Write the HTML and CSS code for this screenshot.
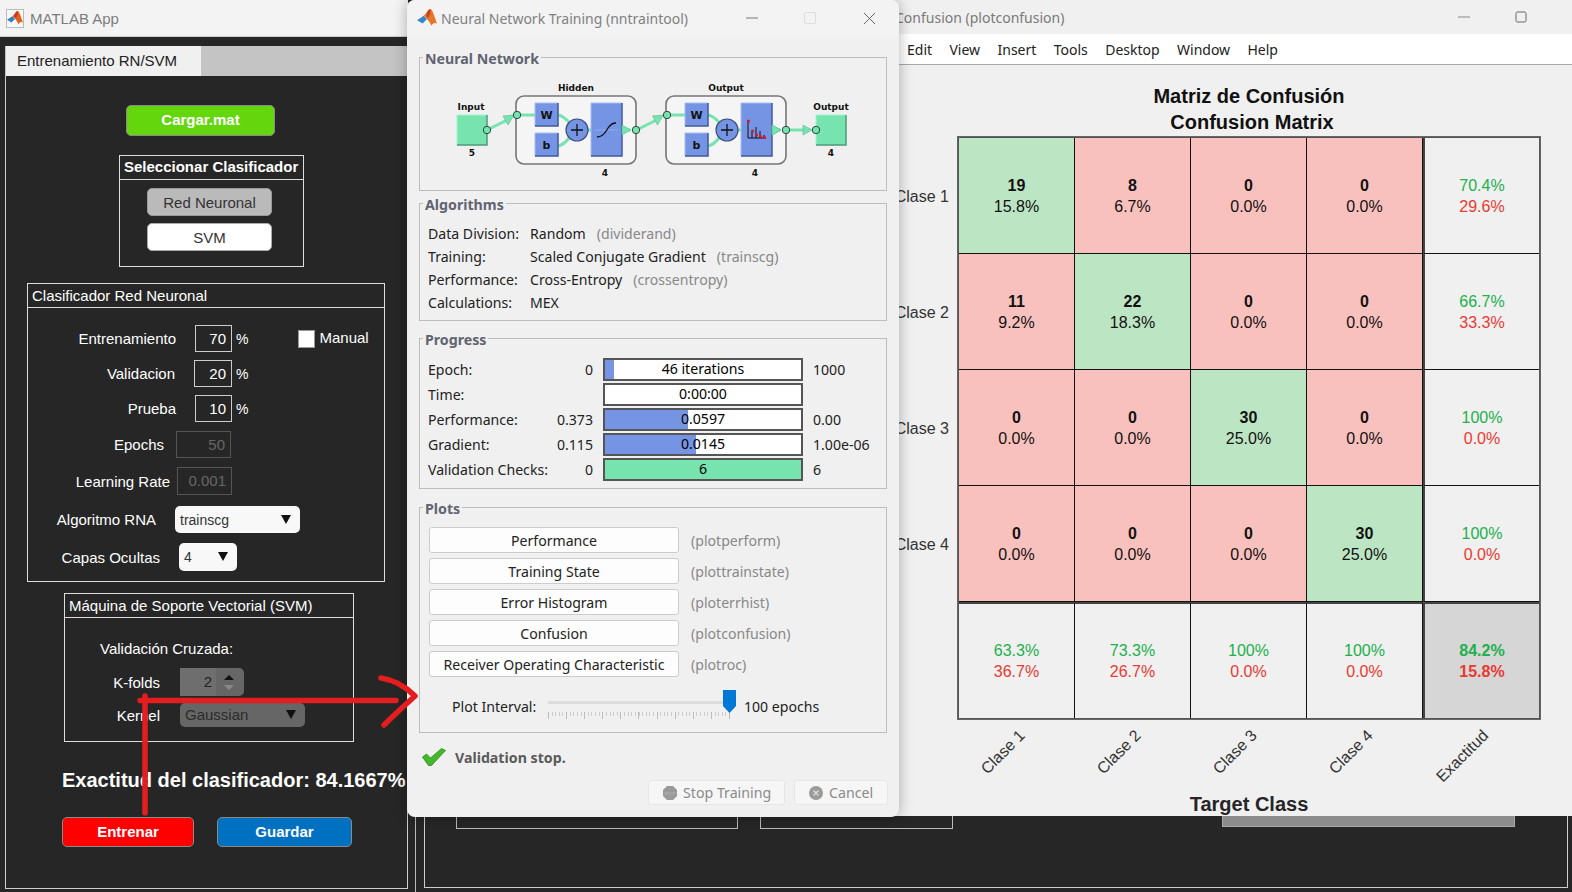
FILE: index.html
```html
<!DOCTYPE html>
<html lang="en">
<head>
    <meta charset="UTF-8">
    <title>MATLAB App</title>
    <link rel="stylesheet" href="styles.css">
</head>
<body>
<div class="desktop">

    <!-- app window sitting behind everything -->
    <div class="back-window">
        <div class="back-frame">
            <div class="back-box back-box-a"></div>
            <div class="back-box back-box-b"></div>
            <div class="back-bar"></div>
        </div>
    </div>

    <!-- left: MATLAB App -->
    <div class="app-window">
        <div class="app-title">
            <span class="app-logo">
                <svg width="16" height="16" viewBox="0 0 18 18"><path d="M0 11 L6 7 L9 10 L5 14 Z" fill="#2f7fc4"/><path d="M6 7 C8 6 10 1 12 1 C14 1 16 9 18 14 C16 13 14.5 13 13 16 C11 12 9 9 6 7 Z" fill="#e2601c"/><path d="M12 1 C10 1 9 5 8 7 L10 9 L12 5 Z" fill="#c8361a"/></svg>
            </span>
            <span class="app-title-text">MATLAB App</span>
        </div>
        <div class="tab-strip"><div class="tab">Entrenamiento RN/SVM</div></div>
        <div class="tab-content">
            <div class="btn-mat btn-load">Cargar.mat</div>

            <div class="group group-select">
                <div class="group-head head-bold">Seleccionar Clasificador</div>
                <div class="btn-choice btn-choice-on">Red Neuronal</div>
                <div class="btn-choice">SVM</div>
            </div>

            <div class="group group-rna">
                <div class="group-head">Clasificador Red Neuronal</div>
                <div class="rna-rows">
                    <div class="field f-train">
                        <span class="lbl">Entrenamiento</span><span class="num">70</span><span class="pct">%</span>
                        <span class="check"></span><span class="check-lbl">Manual</span>
                    </div>
                    <div class="field f-valid">
                        <span class="lbl">Validacion</span><span class="num">20</span><span class="pct">%</span>
                    </div>
                    <div class="field f-test">
                        <span class="lbl">Prueba</span><span class="num">10</span><span class="pct">%</span>
                    </div>
                    <div class="field f-epochs">
                        <span class="lbl">Epochs</span><span class="num num-off">50</span>
                    </div>
                    <div class="field f-rate">
                        <span class="lbl">Learning Rate</span><span class="num num-off">0.001</span>
                    </div>
                    <div class="field f-algo">
                        <span class="lbl">Algoritmo RNA</span><span class="select">trainscg<i class="caret"></i></span>
                    </div>
                    <div class="field f-layers">
                        <span class="lbl">Capas Ocultas</span><span class="select">4<i class="caret"></i></span>
                    </div>
                </div>
            </div>

            <div class="group group-svm">
                <div class="group-head">Máquina de Soporte Vectorial (SVM)</div>
                <div class="svm-note">Validación Cruzada:</div>
                <div class="field f-kfold">
                    <span class="lbl">K-folds</span>
                    <span class="spinner"><span class="spin-val">2</span><span class="spin-btns"><i class="spin-up"></i><i class="spin-down"></i></span></span>
                </div>
                <div class="field f-kernel">
                    <span class="lbl">Kernel</span><span class="select select-off">Gaussian<i class="caret"></i></span>
                </div>
            </div>

            <div class="accuracy">Exactitud del clasificador: 84.1667%</div>

            <div class="action-row">
                <div class="btn-mat btn-train">Entrenar</div>
                <div class="btn-mat btn-save">Guardar</div>
            </div>
        </div>
    </div>

    <!-- right: confusion figure -->
    <div class="figure">
        <div class="fig-title">
            <span>Confusion (plotconfusion)</span>
            <span class="fig-controls">
                <svg width="12" height="12" viewBox="0 0 12 12"><path d="M0 6 H12" stroke="#888" fill="none"/></svg>
                <svg width="12" height="12" viewBox="0 0 12 12"><rect x="1" y="1" width="10" height="10" rx="1.5" stroke="#666" fill="none"/></svg>
            </span>
        </div>
        <div class="fig-menu">
            <span>Edit</span><span>View</span><span>Insert</span><span>Tools</span><span>Desktop</span><span>Window</span><span>Help</span>
        </div>
        <div class="plot">
            <div class="plot-title">Matriz de Confusión<br><span class="plot-subtitle">Confusion Matrix</span></div>
            <div class="y-labels">
                <span>Clase 1</span><span>Clase 2</span><span>Clase 3</span><span>Clase 4</span>
            </div>
            <div class="matrix">
                <div class="cell good"><b>19</b>15.8%</div>
                <div class="cell bad"><b>8</b>6.7%</div>
                <div class="cell bad"><b>0</b>0.0%</div>
                <div class="cell bad"><b>0</b>0.0%</div>
                <div class="cell sum"><em>70.4%</em><u>29.6%</u></div>

                <div class="cell bad"><b>11</b>9.2%</div>
                <div class="cell good"><b>22</b>18.3%</div>
                <div class="cell bad"><b>0</b>0.0%</div>
                <div class="cell bad"><b>0</b>0.0%</div>
                <div class="cell sum"><em>66.7%</em><u>33.3%</u></div>

                <div class="cell bad"><b>0</b>0.0%</div>
                <div class="cell bad"><b>0</b>0.0%</div>
                <div class="cell good"><b>30</b>25.0%</div>
                <div class="cell bad"><b>0</b>0.0%</div>
                <div class="cell sum"><em>100%</em><u>0.0%</u></div>

                <div class="cell bad"><b>0</b>0.0%</div>
                <div class="cell bad"><b>0</b>0.0%</div>
                <div class="cell bad"><b>0</b>0.0%</div>
                <div class="cell good"><b>30</b>25.0%</div>
                <div class="cell sum"><em>100%</em><u>0.0%</u></div>

                <div class="cell foot"><em>63.3%</em><u>36.7%</u></div>
                <div class="cell foot"><em>73.3%</em><u>26.7%</u></div>
                <div class="cell foot"><em>100%</em><u>0.0%</u></div>
                <div class="cell foot"><em>100%</em><u>0.0%</u></div>
                <div class="cell foot total"><em>84.2%</em><u>15.8%</u></div>
            </div>
            <div class="x-labels">
                <span>Clase 1</span><span>Clase 2</span><span>Clase 3</span><span>Clase 4</span><span>Exactitud</span>
            </div>
            <div class="x-title">Target Class</div>
        </div>
    </div>

    <!-- middle: nntraintool dialog -->
    <div class="dialog">
        <div class="dlg-title">
            <svg class="dlg-logo" width="20" height="20" viewBox="0 0 18 18"><path d="M0 11 L6 7 L9 10 L5 14 Z" fill="#3a86c8"/><path d="M6 7 C8 6 10 1 12 1 C14 1 16 9 18 14 C16 13 14.5 13 13 16 C11 12 9 9 6 7 Z" fill="#e8762a"/><path d="M12 1 C10 1 9 5 8 7 L10 9 L12 5 Z" fill="#c9431f"/></svg>
            <span class="dlg-title-text">Neural Network Training (nntraintool)</span>
            <svg class="dlg-min" width="12" height="12" viewBox="0 0 12 12"><path d="M0 6 H12" stroke="#777" fill="none"/></svg>
            <svg class="dlg-max" width="12" height="12" viewBox="0 0 12 12"><rect x="0.5" y="0.5" width="11" height="11" rx="1.5" stroke="#dcdcdc" fill="none"/></svg>
            <svg class="dlg-close" width="13" height="13" viewBox="0 0 13 13"><path d="M1 1 L12 12 M12 1 L1 12" stroke="#666" fill="none"/></svg>
        </div>

        <div class="box box-net">
            <div class="legend">Neural Network</div>
            <svg class="net" width="466" height="123" viewBox="420 66 466 123">
                <defs>
                    <g id="layer">
                        <rect x="516" y="96" width="120" height="68" rx="8" fill="#f5f5f5" stroke="#777" stroke-width="1.6"/>
                        <path d="M517 115 H535 M558 115 C563 116 566 119 569 122 M558 146 C563 145 566 142 569 138 M588 130 H591" stroke="#77e4b0" stroke-width="3" fill="none"/>
                        <rect x="535" y="103" width="23" height="23" fill="#7594e4"/>
                        <path d="M535 126 V103 H558" stroke="#a9bcf2" fill="none"/>
                        <path d="M558 103 V126 H535" stroke="#42599c" stroke-width="1.5" fill="none"/>
                        <text x="546.5" y="119" class="net-big">W</text>
                        <rect x="535" y="133" width="23" height="23" fill="#7594e4"/>
                        <path d="M535 156 V133 H558" stroke="#a9bcf2" fill="none"/>
                        <path d="M558 133 V156 H535" stroke="#42599c" stroke-width="1.5" fill="none"/>
                        <text x="546.5" y="149" class="net-big">b</text>
                        <circle cx="577" cy="130" r="11" fill="#7594e4" stroke="#3e4f7a" stroke-width="1.2"/>
                        <path d="M571 130 H583 M577 124 V136" stroke="#111" stroke-width="1.3" fill="none"/>
                        <rect x="591" y="103" width="31" height="53" fill="#7594e4"/>
                        <path d="M591 156 V103 H622" stroke="#a9bcf2" fill="none"/>
                        <path d="M622 103 V156 H591" stroke="#42599c" stroke-width="1.5" fill="none"/>
                        <path d="M622 130 H630" stroke="#77e4b0" stroke-width="3" fill="none"/>
                        <path d="M622 125 L631 130 L622 135 Z" fill="#77e4b0" stroke="#5bb890" stroke-width="0.6"/>
                        <circle cx="517" cy="115" r="3.7" fill="#77e4b0" stroke="#2c4a3e"/>
                    </g>
                    <g id="link">
                        <path d="M487 130 L510 118.5" stroke="#77e4b0" stroke-width="3" fill="none"/>
                        <path d="M503 116 L514 115 L508 125 Z" fill="#77e4b0" stroke="#5bb890" stroke-width="0.6"/>
                    </g>
                </defs>

                <rect x="457" y="115" width="30" height="30" fill="#77e4b0"/>
                <path d="M457 145 V115 H487" stroke="#a6f0cd" fill="none"/>
                <path d="M487 115 V145 H457" stroke="#4c9a78" stroke-width="1.5" fill="none"/>
                <use href="#link"/>
                <use href="#layer"/>
                <use href="#link" x="149.500"/>
                <use href="#layer" x="150"/>
                <circle cx="487" cy="130" r="3.700" fill="#77e4b0" stroke="#2c4a3e"/>
                <circle cx="636" cy="130" r="3.700" fill="#77e4b0" stroke="#2c4a3e"/>

                <path d="M595 130 H618" stroke="#93aaec" fill="none"/>
                <path d="M597 137 C604 137 606 131 608 128 C610 125 612 123 616 123" stroke="#111" stroke-width="1.300" fill="none"/>

                <path d="M748 120 V138 H766 M752 131 V138 M756 127 V138 M760 131 V138 M764 135 V138" stroke="#111" fill="none"/>
                <circle cx="748.500" cy="121" r="1.500" fill="#e0102a"/>
                <circle cx="752.500" cy="131" r="1.500" fill="#e0102a"/>
                <circle cx="756.500" cy="135" r="1.500" fill="#e0102a"/>
                <circle cx="760.500" cy="136.500" r="1.500" fill="#e0102a"/>
                <circle cx="764.500" cy="137.500" r="1.500" fill="#e0102a"/>

                <path d="M786 130 H810" stroke="#77e4b0" stroke-width="3" fill="none"/>
                <path d="M772 125 L781 130 L772 135 Z M803 125 L812 130 L803 135 Z" fill="#77e4b0" stroke="#5bb890" stroke-width="0.600"/>
                <rect x="816" y="115" width="30" height="30" fill="#77e4b0"/>
                <path d="M816 145 V115 H846" stroke="#a6f0cd" fill="none"/>
                <path d="M846 115 V145 H816" stroke="#4c9a78" stroke-width="1.5" fill="none"/>
                <circle cx="786" cy="130" r="3.700" fill="#77e4b0" stroke="#2c4a3e"/>
                <circle cx="816" cy="130" r="3.700" fill="#77e4b0" stroke="#2c4a3e"/>

                <text x="471" y="110" class="net-lbl">Input</text>
                <text x="472" y="156" class="net-lbl">5</text>
                <text x="576" y="91" class="net-lbl">Hidden</text>
                <text x="605" y="176" class="net-lbl">4</text>
                <text x="726" y="91" class="net-lbl">Output</text>
                <text x="755" y="176" class="net-lbl">4</text>
                <text x="831" y="110" class="net-lbl">Output</text>
                <text x="831" y="156" class="net-lbl">4</text>
            </svg>
        </div>

        <div class="box box-algo">
            <div class="legend">Algorithms</div>
            <div class="algo-rows">
                <div class="algo-row"><span class="algo-key">Data Division:</span><span>Random</span><span class="note">(dividerand)</span></div>
                <div class="algo-row"><span class="algo-key">Training:</span><span>Scaled Conjugate Gradient</span><span class="note">(trainscg)</span></div>
                <div class="algo-row"><span class="algo-key">Performance:</span><span>Cross-Entropy</span><span class="note">(crossentropy)</span></div>
                <div class="algo-row"><span class="algo-key">Calculations:</span><span>MEX</span></div>
            </div>
        </div>

        <div class="box box-prog">
            <div class="legend">Progress</div>
            <div class="prog-rows">
                <div class="prog-row"><span>Epoch:</span><span class="start">0</span>
                    <div class="bar"><div class="fill" style="width:9px"></div><span class="bar-text">46 iterations</span></div><span>1000</span></div>
                <div class="prog-row"><span>Time:</span><span class="start"></span>
                    <div class="bar"><span class="bar-text">0:00:00</span></div><span></span></div>
                <div class="prog-row"><span>Performance:</span><span class="start">0.373</span>
                    <div class="bar"><div class="fill" style="width:83px"></div><span class="bar-text">0.0597</span></div><span>0.00</span></div>
                <div class="prog-row"><span>Gradient:</span><span class="start">0.115</span>
                    <div class="bar"><div class="fill" style="width:91px"></div><span class="bar-text">0.0145</span></div><span>1.00e-06</span></div>
                <div class="prog-row"><span>Validation Checks:</span><span class="start">0</span>
                    <div class="bar"><div class="fill fill-green" style="width:100%"></div><span class="bar-text">6</span></div><span>6</span></div>
            </div>
        </div>

        <div class="box box-plots">
            <div class="legend">Plots</div>
            <div class="plot-btns">
                <div class="plot-row"><span class="plot-btn">Performance</span><span class="note">(plotperform)</span></div>
                <div class="plot-row"><span class="plot-btn">Training State</span><span class="note">(plottrainstate)</span></div>
                <div class="plot-row"><span class="plot-btn">Error Histogram</span><span class="note">(ploterrhist)</span></div>
                <div class="plot-row"><span class="plot-btn">Confusion</span><span class="note">(plotconfusion)</span></div>
                <div class="plot-row"><span class="plot-btn">Receiver Operating Characteristic</span><span class="note">(plotroc)</span></div>
            </div>
            <div class="interval">
                <span class="interval-lbl">Plot Interval:</span>
                <div class="slider">
                    <div class="slider-track"></div>
                    <div class="slider-ticks"></div>
                    <svg class="slider-thumb" width="13" height="23" viewBox="0 0 13 23"><path d="M0 0 H13 V16 L6.500 23 L0 16 Z" fill="#0078d7"/></svg>
                </div>
                <span class="interval-val">100 epochs</span>
            </div>
        </div>

        <div class="status">
            <svg width="24" height="18" viewBox="0 0 24 18"><path d="M0.500 9 L4.500 6 L8.500 10 L19.500 0.500 L23.500 2.500 L9.500 17.500 L6.500 17.500 Z" fill="#44b82a" stroke="#2f8a1c" stroke-width="0.800"/></svg>
            <span>Validation stop.</span>
        </div>

        <div class="dlg-actions">
            <div class="dlg-btn btn-stop">
                <svg width="16" height="16" viewBox="0 0 16 16"><path d="M5 1 H11 L15 5 V11 L11 15 H5 L1 11 V5 Z" fill="#9a9a9a"/><text x="8" y="9.500" class="stop-txt">STOP</text></svg>
                <span>Stop Training</span>
            </div>
            <div class="dlg-btn btn-cancel">
                <svg width="16" height="16" viewBox="0 0 16 16"><circle cx="8" cy="8" r="7" fill="#9a9a9a"/><path d="M5.500 5.500 L10.500 10.500 M10.500 5.500 L5.500 10.500" stroke="#d8d8d8" stroke-width="1.600" fill="none"/></svg>
                <span>Cancel</span>
            </div>
        </div>
    </div>

    <!-- hand drawn arrow on top of the screenshot -->
    <svg class="scribble" width="1572" height="892" viewBox="0 0 1572 892">
        <path d="M145 696 V813 M140 700.500 H396 M381 678 C395 680 406 687 415 696 C405 705 394 715 384 725" stroke="#e41e1e" stroke-width="5.500" stroke-linecap="round" stroke-linejoin="round" fill="none"/>
    </svg>
</div>
</body>
</html>
```

FILE: styles.css
```css
* {
    box-sizing: border-box;
}
body {
    margin: 0;
    font-family: "Liberation Sans", Arial, sans-serif;
}
.desktop {
    position: relative;
    width: 1572px;
    height: 892px;
    overflow: hidden;
    background-color: #262626;
}

/* window behind */
.back-window {
    position: absolute;
    left: 415px;
    top: 37px;
    right: 0;
    bottom: 0;
    border-left: 1px solid #bbb;
    padding: 3px 0 0 8px;
}
.back-frame {
    display: flex;
    align-items: flex-start;
    width: 1144px;
    height: 848px;
    border: 1px solid #ccc;
}
.back-box {
    height: 788px;
    border: 1px solid #bbb;
}
.back-box-a {
    width: 282px;
    margin-left: 31px;
}
.back-box-b {
    width: 193px;
    margin-left: 22px;
}
.back-bar {
    width: 293px;
    height: 786px;
    margin-left: 269px;
    background-color: #8c8c8c;
    border: 1px solid #aaa;
}

/* app window */
.app-window {
    position: absolute;
    left: 0;
    top: 0;
    width: 408px;
    height: 892px;
}
.app-title {
    display: flex;
    align-items: center;
    height: 37px;
    padding-left: 6px;
    background-color: #f3f3f3;
    border-bottom: 1px solid #ccc;
}
.app-logo {
    display: flex;
    align-items: center;
    justify-content: center;
    width: 18px;
    height: 19px;
    background-color: #f7f7f7;
    border: 1px solid #bbb;
}
.app-title-text {
    margin-left: 6px;
    font-size: 15px;
    color: #7d7d7d;
}
.tab-strip {
    width: 403px;
    height: 30px;
    margin: 9px 0 0 5px;
    padding-left: 1px;
    background-color: #c4c4c4;
}
.tab {
    width: 195px;
    height: 30px;
    padding-left: 11px;
    line-height: 30px;
    font-size: 15px;
    color: #222;
    background-color: #f0f0f0;
}
.tab-content {
    width: 403px;
    height: 813px;
    margin-left: 5px;
    border: 1px solid #ccc;
    border-top: 0;
    color: #fff;
    font-size: 15px;
    padding-top: 29px;
}
.btn-mat {
    display: flex;
    align-items: center;
    justify-content: center;
    padding-bottom: 2px;
    font-weight: bold;
    font-size: 15px;
    color: #fff;
    border: 1px solid #8a8a8a;
    border-radius: 5px;
}
.btn-load {
    width: 149px;
    height: 31px;
    margin-left: 120px;
    background-color: #63d60d;
}
.group {
    border: 1px solid #ddd;
}
.group-head {
    height: 24px;
    line-height: 23px;
    padding-left: 4px;
    border-bottom: 1px solid #ddd;
    white-space: nowrap;
}
.head-bold {
    font-weight: bold;
    line-height: 21px;
    padding-left: 4px;
}
.group-select {
    width: 185px;
    height: 112px;
    margin: 19px 0 0 113px;
}
.btn-choice {
    display: flex;
    align-items: center;
    justify-content: center;
    width: 125px;
    height: 28px;
    margin: 7px 0 0 27px;
    border-radius: 5px;
    background-color: #fff;
    border: 1px solid #aaa;
    color: #333;
}
.btn-choice-on {
    margin-top: 8px;
    background-color: #bababa;
    border-color: #999;
}
.group-rna {
    width: 358px;
    height: 299px;
    margin: 16px 0 0 21px;
}
.rna-rows {
    display: grid;
    grid-template-rows: 35px 35px 36px 36px 39px 37px 28px;
    align-items: start;
    margin-top: 17px;
}
.field {
    display: flex;
    align-items: center;
    height: 27px;
}
.lbl {
    flex: none;
    text-align: right;
    white-space: nowrap;
}
.f-train .lbl { width: 167px; padding-right: 19px; }
.f-valid .lbl { width: 166px; padding-right: 19px; }
.f-test .lbl { width: 167px; padding-right: 19px; }
.f-epochs .lbl { width: 148px; padding-right: 12px; }
.f-rate .lbl { width: 149px; padding-right: 7px; }
.f-algo .lbl { width: 147px; padding-right: 19px; }
.f-layers .lbl { width: 151px; padding-right: 19px; }
.f-rate, .f-layers { height: 28px; }
.num {
    display: block;
    width: 37px;
    height: 100%;
    padding-right: 5px;
    text-align: right;
    line-height: 25px;
    border: 1px solid #ccc;
}
.f-valid .num { width: 38px; }
.num-off {
    width: 55px;
    border-color: #555;
    color: #666;
}
.pct {
    margin-left: 4px;
    font-size: 14px;
}
.check {
    width: 17px;
    height: 18px;
    margin-left: 50px;
    background-color: #fff;
    border: 1px solid #999;
}
.check-lbl {
    margin: 0 0 2px 4px;
}
.select {
    position: relative;
    display: block;
    height: 100%;
    width: 125px;
    padding-left: 5px;
    line-height: 28px;
    font-size: 14px;
    color: #333;
    background-color: #f8f8f8;
    border-radius: 5px;
}
.f-layers .select {
    width: 58px;
}
.caret {
    position: absolute;
    right: 9px;
    top: 9px;
    width: 0;
    height: 0;
    border-left: 5.5px solid transparent;
    border-right: 5.5px solid transparent;
    border-top: 9px solid #111;
}
.group-svm {
    width: 290px;
    height: 149px;
    margin: 11px 0 0 58px;
}
.svm-note {
    height: 20px;
    line-height: 20px;
    margin: 21px 0 0 35px;
}
.f-kfold {
    height: 28px;
    margin-top: 9px;
}
.f-kernel {
    height: 24px;
    margin-top: 7px;
}
.f-kfold .lbl, .f-kernel .lbl {
    width: 115px;
    padding-right: 20px;
}
.spinner {
    display: flex;
    width: 64px;
    height: 100%;
    border-radius: 0 5px 5px 0;
    background-color: #666;
    overflow: hidden;
}
.spin-val {
    width: 36px;
    text-align: right;
    padding-right: 4px;
    line-height: 28px;
    color: #222;
    background-color: #6e6e6e;
}
.spin-btns {
    display: flex;
    flex-direction: column;
    align-items: center;
    justify-content: center;
    gap: 5px;
    width: 26px;
}
.spin-up {
    border-left: 5px solid transparent;
    border-right: 5px solid transparent;
    border-bottom: 5px solid #111;
}
.spin-down {
    border-left: 5px solid transparent;
    border-right: 5px solid transparent;
    border-top: 5px solid #888;
}
.select-off {
    background-color: #666;
    line-height: 24px;
    color: #2b2b2b;
    font-size: 15px;
}
.select-off .caret {
    top: 7px;
}
.accuracy {
    margin: 26px 0 0 56px;
    height: 24px;
    line-height: 24px;
    font-size: 20px;
    font-weight: bold;
    white-space: nowrap;
}
.action-row {
    display: flex;
    gap: 23px;
    margin: 25px 0 0 56px;
}
.btn-train {
    width: 132px;
    height: 30px;
    background-color: #ff0000;
}
.btn-save {
    width: 135px;
    height: 30px;
    background-color: #0070c0;
}

/* confusion figure */
.figure {
    position: absolute;
    left: 880px;
    top: 0;
    width: 692px;
    height: 816px;
    overflow: hidden;
    background-color: #f0f0f0;
}
.fig-title {
    display: flex;
    align-items: center;
    justify-content: space-between;
    height: 34px;
    padding: 0 45px 0 15px;
    font-family: "Noto Sans", sans-serif;
    font-size: 14px;
    color: #7a7a7a;
}
.fig-controls {
    display: flex;
    gap: 45px;
}
.fig-menu {
    display: flex;
    align-items: center;
    gap: 17.4px;
    height: 31px;
    padding: 1px 0 0 27px;
    background-color: #fff;
    border-bottom: 1px solid #a8a8a8;
    font-family: "Noto Sans", sans-serif;
    font-size: 14px;
    color: #222;
}
.plot {
    display: grid;
    grid-template-columns: 69px 582px;
    column-gap: 9px;
    padding-top: 18px;
}
.plot-title {
    grid-column: 2;
    height: 54px;
    line-height: 26px;
    text-align: center;
    font-size: 20px;
    font-weight: bold;
    color: #111;
}
.plot-subtitle {
    padding-left: 6px;
}
.y-labels {
    grid-column: 1;
    display: grid;
    grid-template-rows: repeat(4, 116px);
    align-items: center;
    justify-items: end;
    padding-top: 2px;
    font-size: 16px;
    color: #333;
}
.matrix {
    grid-column: 2;
    display: grid;
    grid-template-columns: repeat(5, 116px);
    grid-auto-rows: 116px;
    border: 1px solid #555;
    width: 582px;
    height: 582px;
    outline: 1px solid #666;
}
.cell {
    display: flex;
    flex-direction: column;
    align-items: center;
    justify-content: center;
    line-height: 21px;
    font-size: 16px;
    color: #111;
    border-right: 1px solid #111;
    border-bottom: 1px solid #111;
}
.cell b {
    font-weight: bold;
}
.cell em {
    font-style: normal;
    color: #21b04b;
}
.cell u {
    text-decoration: none;
    color: #ea3a30;
}
.good { background-color: #bce5c3; }
.bad { background-color: #f9c1bd; }
.sum { background-color: #f0f0f0; border-left: 2px solid #444; border-right: 0; }
.foot { background-color: #f0f0f0; border-top: 2px solid #444; border-bottom: 0; }
.total { background-color: #d6d6d6; font-weight: bold; border-left: 2px solid #444; border-right: 0; }
.x-labels {
    grid-column: 2;
    display: grid;
    grid-template-columns: repeat(5, 116px);
    height: 64px;
    padding-top: 5px;
    font-size: 16px;
    color: #333;
}
.x-labels span {
    justify-self: end;
    align-self: start;
    margin-right: 52px;
    white-space: nowrap;
    transform: rotate(-45deg);
    transform-origin: right center;
}
.x-title {
    grid-column: 2;
    padding-top: 10px;
    text-align: center;
    font-size: 20px;
    font-weight: bold;
    color: #262626;
}

/* nntraintool */
.dialog {
    position: absolute;
    left: 407px;
    top: 0;
    width: 492px;
    height: 817px;
    background-color: #f0f0f0;
    border-radius: 8px;
    box-shadow: 0 0 14px rgba(0, 0, 0, 0.3);
    font-family: "Noto Sans", sans-serif;
    font-size: 14.1px;
    color: #222;
}
.dlg-title {
    display: flex;
    align-items: center;
    height: 36px;
    padding: 0 23px 0 10px;
    border-radius: 8px 8px 0 0;
    background-color: #f3f3f3;
}
.dlg-title-text {
    margin-left: 4px;
    font-size: 14px;
    color: #808080;
    white-space: nowrap;
}
.dlg-min { margin-left: auto; }
.dlg-max { margin-left: 46px; }
.dlg-close { margin-left: 47px; }
.box {
    width: 468px;
    margin-left: 12px;
    border: 1px solid #bdbdbd;
}
.legend {
    width: fit-content;
    height: 16px;
    line-height: 18px;
    margin: -8px 0 0 3px;
    padding: 0 2px;
    font-weight: bold;
    font-size: 14.2px;
    color: #5f6470;
    background-color: #f0f0f0;
}
.box-net {
    height: 134px;
    margin-top: 21px;
}
.net {
    display: block;
}
.net-lbl {
    font-family: "DejaVu Sans", sans-serif;
    font-size: 9px;
    font-weight: bold;
    text-anchor: middle;
    fill: #111;
}
.net-big {
    font-family: "DejaVu Sans", sans-serif;
    font-size: 11px;
    font-weight: bold;
    text-anchor: middle;
    fill: #111;
}
.box-algo {
    height: 118px;
    margin-top: 12px;
}
.algo-rows {
    padding: 9.5px 0 0 8px;
}
.algo-row {
    display: flex;
    height: 23px;
    align-items: center;
}
.algo-key {
    width: 102px;
}
.note {
    margin-left: 11px;
    color: #888;
}
.box-prog {
    height: 151px;
    margin-top: 17px;
}
.prog-rows {
    padding: 10px 0 0 8px;
}
.prog-row {
    display: grid;
    grid-template-columns: 95px 60px 200px auto;
    column-gap: 10px;
    align-items: center;
    height: 25px;
    white-space: nowrap;
}
.start {
    text-align: right;
}
.bar {
    position: relative;
    height: 23px;
    border: 2px solid #555;
    background-color: #fff;
    text-align: center;
    line-height: 18px;
    color: #000;
}
.fill {
    position: absolute;
    left: 0;
    top: 0;
    bottom: 0;
    background-color: #7594e4;
}
.fill-green {
    background-color: #77e4b0;
}
.bar-text {
    position: relative;
}
.box-plots {
    height: 226px;
    margin-top: 18px;
}
.plot-btns {
    display: flex;
    flex-direction: column;
    gap: 5px;
    padding: 11px 0 0 9px;
}
.plot-row {
    display: flex;
    align-items: center;
    height: 26px;
}
.plot-row .note {
    margin-left: 12px;
}
.plot-btn {
    width: 250px;
    height: 26px;
    line-height: 25px;
    text-align: center;
    background-color: #fdfdfd;
    border: 1px solid #ccc;
    border-radius: 3px;
    white-space: nowrap;
}
.interval {
    display: flex;
    align-items: center;
    height: 30px;
    margin: 15px 0 0 32px;
}
.interval-lbl {
    width: 96px;
    margin-bottom: 2px;
}
.interval-val {
    margin-bottom: 2px;
}
.slider {
    position: relative;
    width: 188px;
    height: 30px;
    margin-right: 8px;
}
.slider-track {
    position: absolute;
    left: 0;
    top: 9px;
    width: 182px;
    height: 3px;
    background-color: #dcdcdc;
}
.slider-ticks {
    position: absolute;
    left: 0;
    top: 20px;
    width: 183px;
    height: 7px;
    background-image:
        repeating-linear-gradient(to right, #bbb 0, #bbb 1px, transparent 1px, transparent 18.100px),
        repeating-linear-gradient(to right, #ccc 0, #ccc 1px, transparent 1px, transparent 3.620px);
    background-size: 100% 7px, 100% 4px;
    background-repeat: no-repeat;
}
.slider-thumb {
    position: absolute;
    left: 175px;
    top: -2px;
}
.status {
    display: flex;
    align-items: center;
    gap: 9px;
    height: 20px;
    margin: 14px 0 0 15px;
    font-weight: bold;
    font-size: 14.2px;
    color: #5a5a5a;
}
.dlg-actions {
    display: flex;
    justify-content: flex-end;
    gap: 9px;
    margin: 13px 11px 0 0;
}
.dlg-btn {
    display: flex;
    align-items: center;
    gap: 5px;
    height: 25px;
    background-color: #f6f6f6;
    border: 1px solid #e6e6e6;
    border-radius: 3px;
    color: #8a8a8a;
    font-size: 14.2px;
}
.btn-stop {
    width: 137px;
    padding-left: 13px;
}
.btn-cancel {
    width: 94px;
    padding-left: 13px;
}
.stop-txt {
    font-family: "Liberation Sans", sans-serif;
    font-size: 4px;
    text-anchor: middle;
    fill: #bdbdbd;
}

.scribble {
    position: absolute;
    left: 0;
    top: 0;
    pointer-events: none;
}
```
